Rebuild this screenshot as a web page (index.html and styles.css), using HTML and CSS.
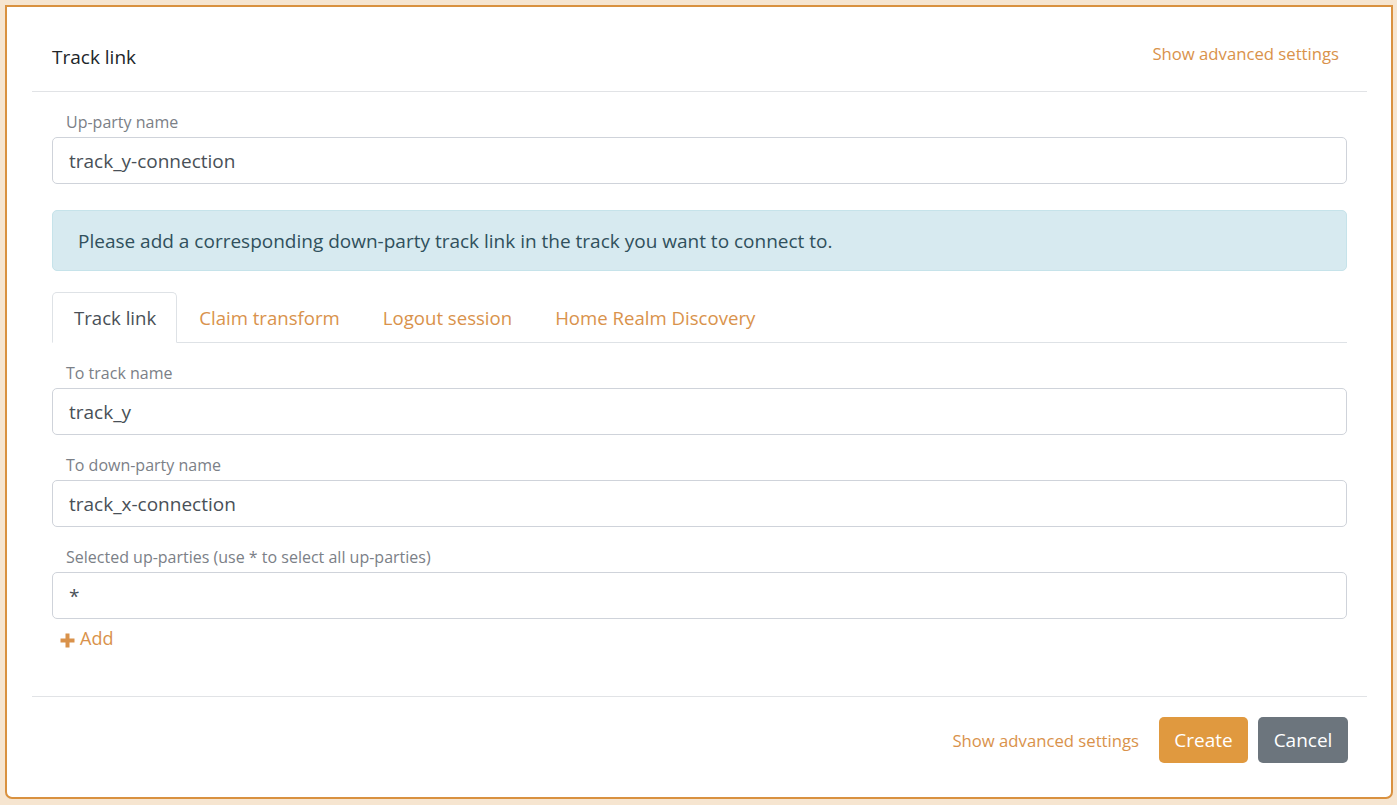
FILE: index.html
```html
<!DOCTYPE html>
<html lang="en">
<head>
<meta charset="utf-8">
<title>Track link</title>
<link rel="stylesheet" href="styles.css">
</head>
<body>
<div class="card">
  <div class="header">
    <div class="title">Track link</div>
    <a class="link adv-top" href="#">Show advanced settings</a>
  </div>
  <div class="body">
    <div class="group">
      <label class="label">Up-party name</label>
      <div class="input">track_y-connection</div>
    </div>
    <div class="alert">Please add a corresponding down-party track link in the track you want to connect to.</div>
    <div class="tabs">
      <div class="tab active">Track link</div>
      <div class="tab">Claim transform</div>
      <div class="tab">Logout session</div>
      <div class="tab">Home Realm Discovery</div>
    </div>
    <div class="tab-content">
      <div class="group">
        <label class="label">To track name</label>
        <div class="input">track_y</div>
      </div>
      <div class="group">
        <label class="label">To down-party name</label>
        <div class="input">track_x-connection</div>
      </div>
      <div class="group last">
        <label class="label">Selected up-parties (use * to select all up-parties)</label>
        <div class="input">*</div>
      </div>
      <a class="link add" href="#"><svg class="plus" width="15" height="15" viewBox="0 0 15 15"><path d="M7.5 0.5V14.5M0.5 7.5H14.5" stroke="#d9924b" stroke-width="4"/></svg><span>Add</span></a>
    </div>
  </div>
  <div class="footer">
    <a class="link" href="#">Show advanced settings</a>
    <button class="btn create">Create</button>
    <button class="btn cancel">Cancel</button>
  </div>
</div>
</body>
</html>
```

FILE: styles.css
```css
* { box-sizing: border-box; }
html, body { margin: 0; }
body {
  background: #f6e5d0;
  padding: 5px 4px 6px 5px;
  font-family: "Open Sans", "Noto Sans", sans-serif;
  font-size: 19px;
  color: #495057;
}
.card {
  height: 794px;
  background: #fff;
  border: 2px solid #d9913f;
  border-radius: 0 0 7px 7px;
  padding: 0 24px 0 25px;
  display: flex;
  flex-direction: column;
}
.link {
  color: #d9924b;
  text-decoration: none;
  font-size: 16.7px;
  line-height: 27px;
}
.header {
  display: flex;
  justify-content: space-between;
  align-items: flex-start;
  padding: 33px 28px 20px 20px;
  border-bottom: 1px solid #e1e3e6;
}
.title {
  color: #212529;
  font-size: 19px;
  line-height: 27px;
  margin-top: 4px;
}
.body {
  flex: 1;
  padding: 19px 20px 0 20px;
}
.group { margin-bottom: 19px; }
.group.last { margin-bottom: 6px; }
.label {
  display: block;
  color: #7b8087;
  font-size: 16px;
  line-height: 22px;
  padding-left: 14px;
  margin-bottom: 4px;
}
.input {
  height: 47px;
  border: 1px solid #cfd3da;
  border-radius: 5px;
  padding: 0 16px;
  display: flex;
  align-items: center;
  font-size: 19px;
  color: #495057;
}
.alert {
  margin-top: 26px;
  height: 61px;
  background: #d7eaf0;
  border: 1px solid #c6e3ea;
  border-radius: 5px;
  padding: 0 25px;
  display: flex;
  align-items: center;
  color: #30505c;
  font-size: 19px;
}
.tabs {
  margin-top: 21px;
  display: flex;
  border-bottom: 1px solid #dee2e6;
  height: 51px;
}
.tab {
  padding: 0 20px 0 21px;
  display: flex;
  align-items: center;
  color: #d9924b;
  font-size: 18.6px;
  border: 1px solid transparent;
  border-top-left-radius: 5px;
  border-top-right-radius: 5px;
  margin-bottom: -1px;
}
.tab.active {
  color: #495057;
  border-color: #dee2e6 #dee2e6 #fff;
  background: #fff;
}
.tab-content { padding-top: 19px; }
.add {
  display: inline-flex;
  align-items: center;
  gap: 5px;
  padding-left: 8px;
  font-size: 18px;
}
.plus { margin-top: 4px; }
.footer {
  border-top: 1px solid #e1e3e6;
  padding: 20px 19px 34px 0;
  display: flex;
  justify-content: flex-end;
  align-items: center;
  gap: 10px;
}
.footer .link { margin-right: 10px; }
.btn {
  height: 46px;
  border: none;
  border-radius: 5px;
  color: #fff;
  font-family: "Open Sans", "Noto Sans", sans-serif;
  font-size: 19px;
  padding: 0 12px;
}
.create { background: #e0993f; width: 89px; }
.cancel { background: #6c757d; width: 90px; }
```
